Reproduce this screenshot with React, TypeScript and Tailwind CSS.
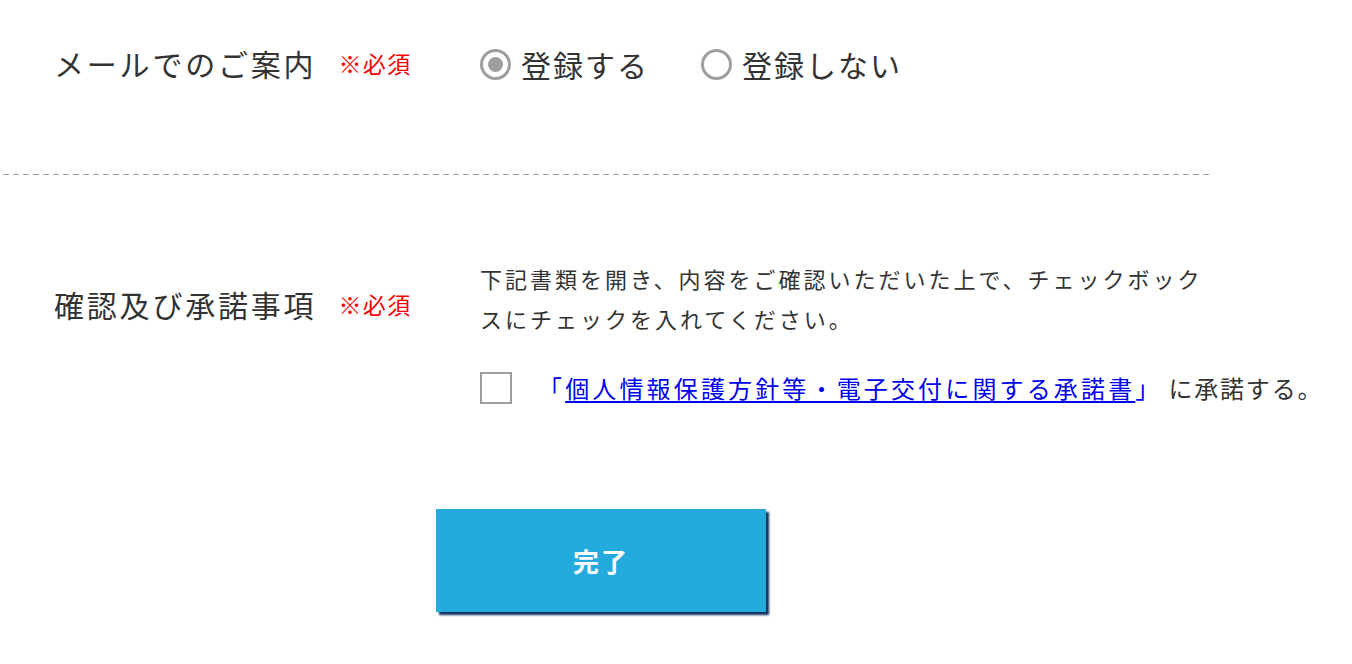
import React, { useState } from 'react';

const Required = () => (
  <span className="ml-[22px] text-[23px] tracking-[1.4px] text-[#ff0000]">※必須</span>
);

const Radio = ({ checked, label, onClick }: { checked: boolean; label: string; onClick: () => void }) => (
  <label className="flex items-center cursor-pointer" onClick={onClick}>
    <span className="w-[31px] h-[31px] rounded-full border-[3px] border-[#9e9e9e] flex items-center justify-center shrink-0">
      {checked && <span className="w-[15px] h-[15px] rounded-full bg-[#9e9e9e]" />}
    </span>
    <span className="ml-[10px] text-[30px] tracking-[2px]">{label}</span>
  </label>
);

export default function App() {
  const [mail, setMail] = useState(true);
  const [agreed, setAgreed] = useState(false);

  return (
    <div className="w-[1352px] h-[664px] bg-white overflow-hidden font-['Noto_Sans_CJK_JP',sans-serif] text-[#333]">
      {/* mail row */}
      <div className="h-[130px] flex items-center">
        <div className="w-[480px] pl-[54px] mb-[4px] flex items-center shrink-0">
          <span className="text-[30px] tracking-[2.8px]">メールでのご案内</span>
          <Required />
        </div>
        <div className="flex items-center gap-[52px] mb-[2px]">
          <Radio checked={mail} label="登録する" onClick={() => setMail(true)} />
          <Radio checked={!mail} label="登録しない" onClick={() => setMail(false)} />
        </div>
      </div>

      <div className="mt-[44px] ml-[3px] w-[1207px] h-px bg-[repeating-linear-gradient(90deg,#9a9a9a_0_6px,transparent_6px_10px)]" />

      {/* consent row */}
      <div className="flex items-start pt-[83px]">
        <div className="w-[480px] pl-[54px] mt-[24px] flex items-center shrink-0 leading-[45px]">
          <span className="text-[30px] tracking-[2.8px]">確認及び承諾事項</span>
          <Required />
        </div>
        <div className="flex-1">
          <p className="w-[740px] text-[22px] leading-[40px] tracking-[3px]">
            下記書類を開き、内容をご確認いただいた上で、チェックボックスにチェックを入れてください。
          </p>
          <div className="mt-[32px] flex items-center">
            <button
              onClick={() => setAgreed(!agreed)}
              className="w-[32px] h-[32px] border-2 border-[#9e9e9e] bg-white shrink-0 flex items-center justify-center"
            >
              {agreed && '✓'}
            </button>
            <span className="ml-[26px] text-[24px] tracking-[3.15px] whitespace-nowrap">
              <span className="text-[#0000ee]">
                「<a href="#" className="underline underline-offset-[3px]">個人情報保護方針等・電子交付に関する承諾書</a>」
              </span>
              <span className="ml-[6px] tracking-[1.8px]">に承諾する。</span>
            </span>
          </div>
        </div>
      </div>

      <div className="mt-[103px] ml-[436px]">
        <button className="w-[330px] h-[103px] bg-[#23abdd] text-white text-[26px] font-bold tracking-[2px] shadow-[3px_3px_2px_#0d2f5e]">
          完了
        </button>
      </div>
    </div>
  );
}
